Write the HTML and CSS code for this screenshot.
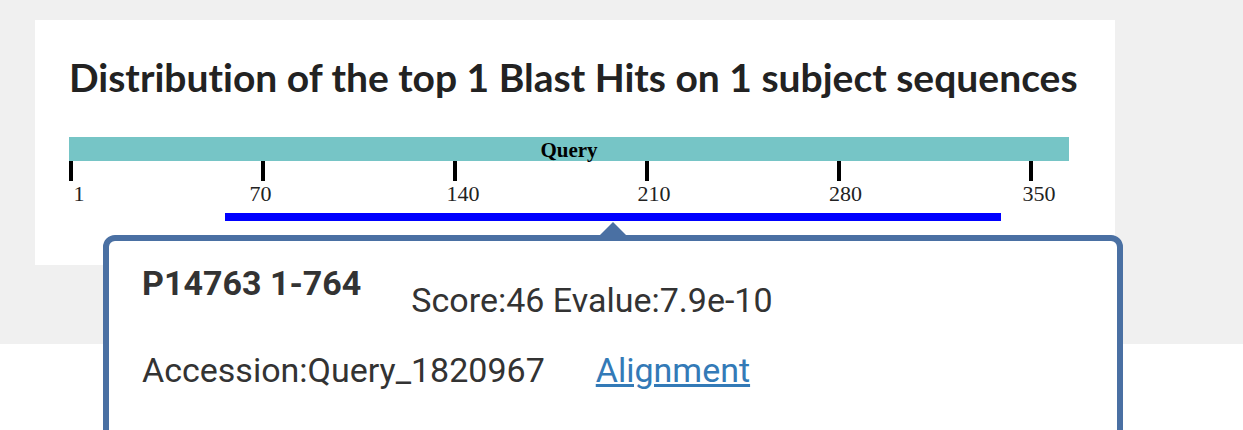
FILE: index.html
```html
<!DOCTYPE html>
<html lang="en">
<head>
  <meta charset="UTF-8">
  <title>Blast Hits</title>
  <link rel="stylesheet" href="styles.css">
</head>
<body>

  <div class="section">
    <div class="card">
      <h2 class="title">Distribution of the top 1 Blast Hits on 1 subject sequences</h2>

      <svg class="hits" width="1010" height="90" viewBox="0 0 1010 90">
        <!-- query sequence -->
        <rect x="0" y="0" width="1000" height="24" fill="#76c5c6"/>
        <text class="query-label" x="500" y="20" text-anchor="middle">Query</text>

        <!-- axis -->
        <g fill="#000">
          <rect x="0" y="24" width="4" height="20"/>
          <rect x="192" y="24" width="4" height="20"/>
          <rect x="384" y="24" width="4" height="20"/>
          <rect x="576" y="24" width="4" height="20"/>
          <rect x="768" y="24" width="4" height="20"/>
          <rect x="960" y="24" width="4" height="20"/>
        </g>
        <g class="axis-label" text-anchor="middle">
          <text x="10" y="64">1</text>
          <text x="191.5" y="64">70</text>
          <text x="394" y="64">140</text>
          <text x="585" y="64">210</text>
          <text x="776.5" y="64">280</text>
          <text x="970" y="64">350</text>
        </g>

        <!-- hit -->
        <rect x="156" y="76" width="776" height="8" fill="#0000ff"/>
      </svg>
    </div>
  </div>

  <div class="tip">
    <div class="tip-head">
      <span class="tip-name">P14763 1-764</span>
      <span class="tip-score">Score:46 Evalue:7.9e-10</span>
    </div>
    <div class="tip-row">
      <span>Accession:Query_1820967</span>
      <a href="#" class="tip-link">Alignment</a>
    </div>
  </div>

</body>
</html>
```

FILE: styles.css
```css
* {
  margin: 0;
  padding: 0;
  box-sizing: border-box;
}

body {
  width: 100%;
  height: 100vh;
  overflow: hidden;
  background: #fff;
  font-family: 'Roboto', sans-serif;
  color: #333;
  position: relative;
}

.section {
  background: #f0f0f0;
  height: 344px;
  padding: 20px 0 0 35px;
}

.card {
  width: 1080px;
  height: 245px;
  background: #fff;
  padding: 34px 0 0 34px;
}

.title {
  font-family: 'Lato', sans-serif;
  font-weight: 700;
  font-size: 39px;
  line-height: 46px;
  font-variant-ligatures: none;
  color: #222;
  white-space: nowrap;
}

.hits {
  display: block;
  margin-top: 37px;
}

.query-label {
  font-family: 'Liberation Serif', serif;
  font-weight: bold;
  font-size: 21px;
  fill: #000;
}

.axis-label {
  font-family: 'Liberation Serif', serif;
  font-size: 22px;
  fill: #222;
}

/* hover box for the hit */
.tip {
  position: absolute;
  left: 103px;
  top: 235px;
  width: 1020px;
  height: 260px;
  background: #fff;
  border: 6px solid #4a70a3;
  border-radius: 12px;
  padding: 22px 0 0 33px;
  font-size: 34px;
  z-index: 10;
}

.tip::before {
  content: "";
  position: absolute;
  top: -19px;
  left: 50%;
  margin-left: -13px;
  border-left: 13px solid transparent;
  border-right: 13px solid transparent;
  border-bottom: 13px solid #4a70a3;
}

.tip-head {
  display: flex;
  align-items: flex-start;
  gap: 50px;
}

.tip-name {
  font-weight: 700;
}

.tip-score {
  margin-top: 17px;
}

.tip-row {
  display: flex;
  gap: 51px;
  margin-top: 30px;
}

.tip-link {
  color: #337ab7;
  text-decoration: underline;
}
```
